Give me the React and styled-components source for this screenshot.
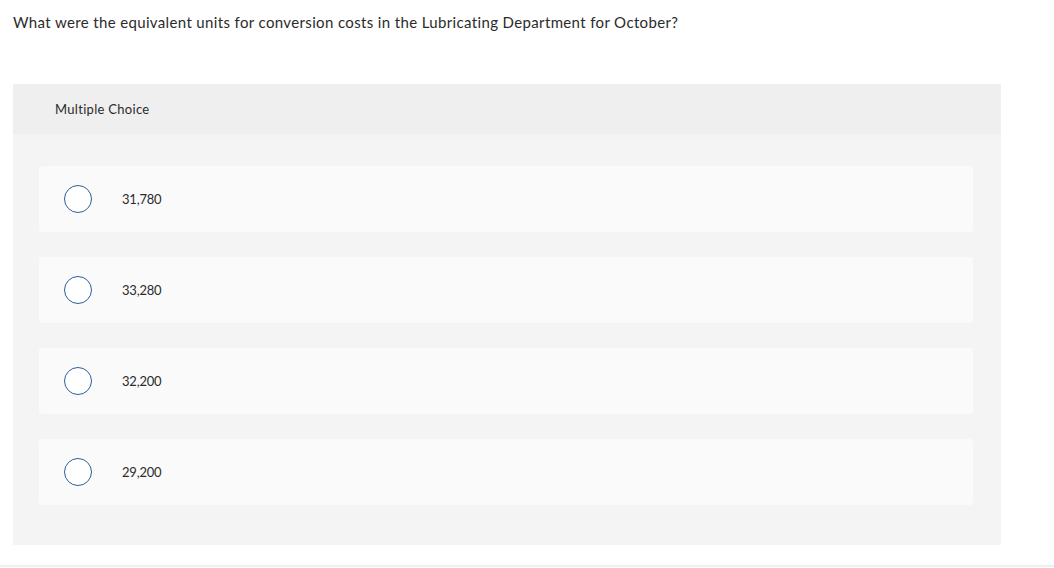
import React from 'react';
import styled, { createGlobalStyle } from 'styled-components';

const GlobalStyle = createGlobalStyle`
  html, body {
    margin: 0;
    padding: 0;
    background: #fff;
  }
  body {
    font-family: Lato, "Open Sans", sans-serif;
    color: #333;
  }
`;

const Page = styled.div`
  width: 1054px;
  height: 567px;
  box-sizing: border-box;
  padding: 12px 53px 0 13px;
  border-bottom: 2px solid #f0f0f0;
`;

const Question = styled.p`
  margin: 0;
  font-size: 15px;
  line-height: 20px;
  letter-spacing: 0.36px;
  color: #2b2b2b;
`;

const Panel = styled.section`
  margin-top: 52px;
  background: #f4f4f4;
  padding-bottom: 40px;
`;

const PanelHeader = styled.div`
  height: 50px;
  background: #efefef;
  display: flex;
  align-items: center;
  padding-left: 42px;
  font-size: 13px;
  letter-spacing: 0.3px;
  color: #2b2b2b;
`;

const Options = styled.div`
  display: flex;
  flex-direction: column;
  gap: 25px;
  padding: 32px 28px 0 26px;
`;

const Option = styled.label`
  height: 66px;
  background: #fafafa;
  border-radius: 3px;
  display: flex;
  align-items: center;
  padding-left: 25px;
  cursor: pointer;
`;

const Radio = styled.span`
  width: 28px;
  height: 28px;
  box-sizing: border-box;
  border-radius: 50%;
  border: 1.5px solid #2b5f99;
  background: #fff;
  flex: none;
`;

const OptionText = styled.span`
  margin-left: 30px;
  font-size: 13px;
  letter-spacing: -0.2px;
  color: #2b2b2b;
`;

const choices = ['31,780', '33,280', '32,200', '29,200'];

export default function App() {
  return (
    <>
      <GlobalStyle />
      <Page>
        <Question>
          What were the equivalent units for conversion costs in the Lubricating Department for October?
        </Question>
        <Panel>
          <PanelHeader>Multiple Choice</PanelHeader>
          <Options>
            {choices.map((c) => (
              <Option key={c}>
                <Radio />
                <OptionText>{c}</OptionText>
              </Option>
            ))}
          </Options>
        </Panel>
      </Page>
    </>
  );
}
